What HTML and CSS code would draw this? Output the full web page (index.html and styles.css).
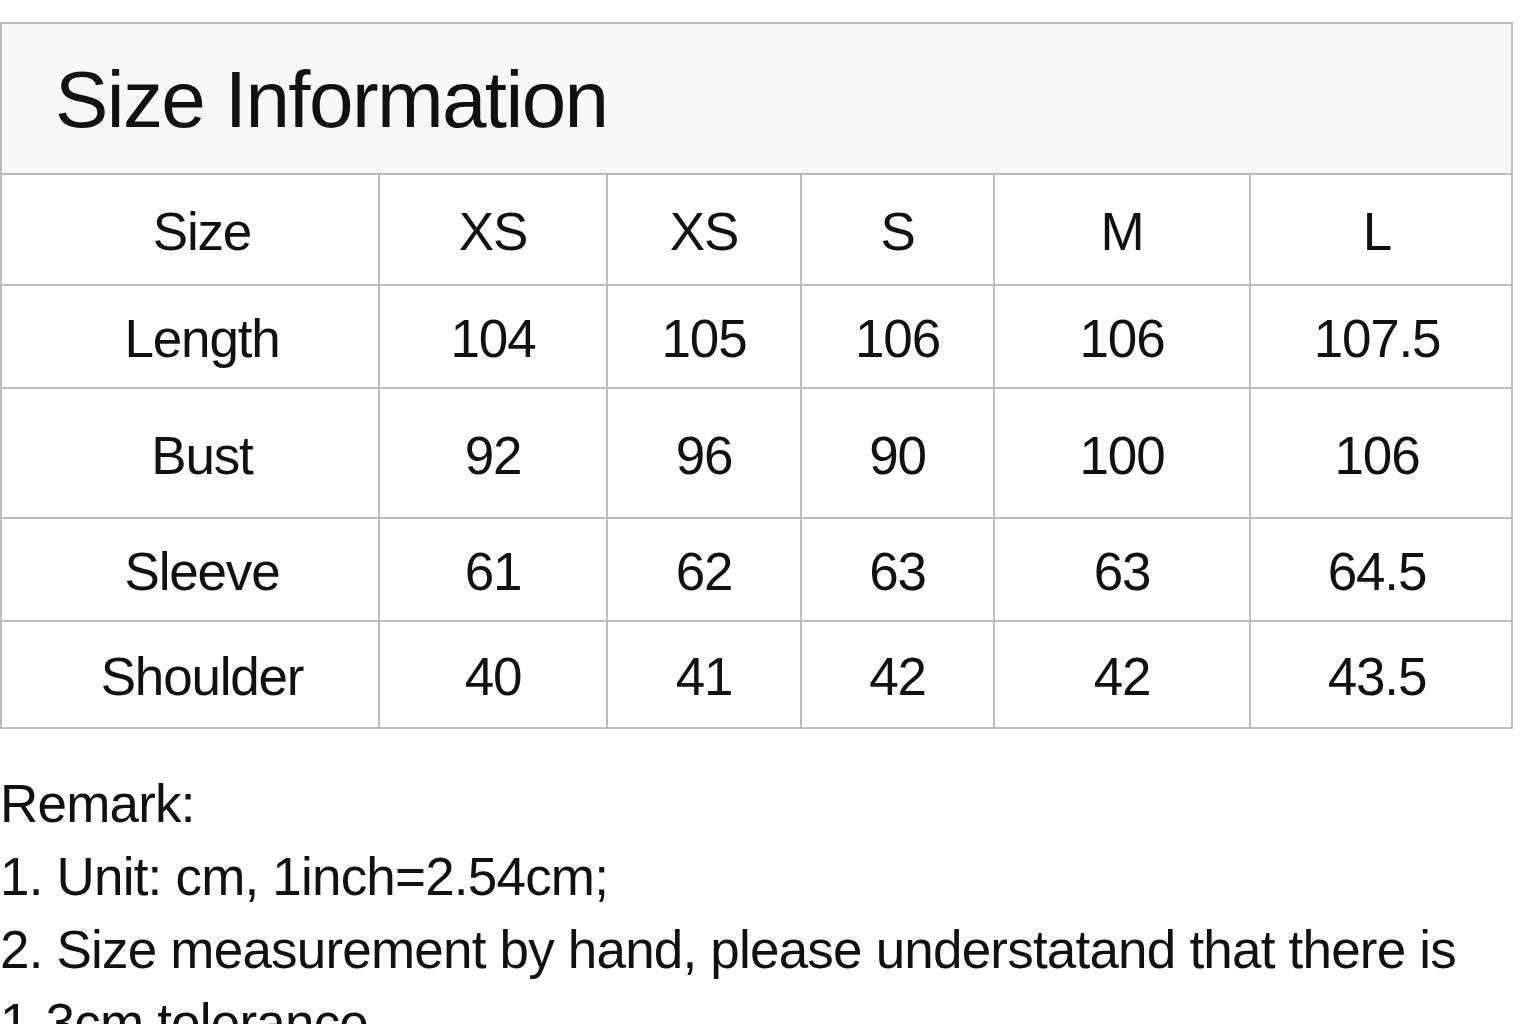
FILE: index.html
```html
<!DOCTYPE html>
<html lang="en">
<head>
<meta charset="utf-8">
<title>Size Information</title>
<link rel="stylesheet" href="styles.css">
</head>
<body>
<div class="sheet">
  <div class="title">Size Information</div>
  <div class="grid">
    <div class="cell first r1">Size</div><div class="cell r1">XS</div><div class="cell r1">XS</div><div class="cell r1">S</div><div class="cell r1">M</div><div class="cell last r1">L</div>
    <div class="cell first r2">Length</div><div class="cell r2">104</div><div class="cell r2">105</div><div class="cell r2">106</div><div class="cell r2">106</div><div class="cell last r2">107.5</div>
    <div class="cell first r3">Bust</div><div class="cell r3">92</div><div class="cell r3">96</div><div class="cell r3">90</div><div class="cell r3">100</div><div class="cell last r3">106</div>
    <div class="cell first r4">Sleeve</div><div class="cell r4">61</div><div class="cell r4">62</div><div class="cell r4">63</div><div class="cell r4">63</div><div class="cell last r4">64.5</div>
    <div class="cell first r5">Shoulder</div><div class="cell r5">40</div><div class="cell r5">41</div><div class="cell r5">42</div><div class="cell r5">42</div><div class="cell last r5">43.5</div>
  </div>
  <div class="remark">
    <p>Remark:</p>
    <p>1. Unit: cm, 1inch=2.54cm;</p>
    <p>2. Size measurement by hand, please understatand that there is <span class="nowrap">1-3cm</span> tolerance</p>
  </div>
</div>
</body>
</html>
```
FILE: styles.css
```css
* { box-sizing: border-box; }
html, body {
  margin: 0;
  padding: 0;
  background: #ffffff;
}
body {
  font-family: "Liberation Sans", Arial, Helvetica, sans-serif;
  color: #111111;
  overflow: hidden;
}
.sheet {
  width: 1513px;
  padding-top: 22px;
}
.title {
  height: 153px;
  border: 2px solid #bdbdbd;
  background: #f8f8f8;
  font-size: 80px;
  letter-spacing: -1.6px;
  display: flex;
  align-items: center;
  padding-left: 53px;
  padding-top: 2px;
}
.grid {
  display: grid;
  grid-template-columns: 378px 228px 194px 193px 256px 262px;
  border-left: 2px solid #bdbdbd;
}
.cell {
  border-right: 2px solid #bdbdbd;
  border-bottom: 2px solid #bdbdbd;
  display: flex;
  align-items: center;
  justify-content: center;
  font-size: 53px;
  letter-spacing: -1.2px;
  padding-top: 4px;
}
.cell.first { padding-left: 24px; }
.cell.last { padding-right: 8px; }
.r1 { height: 111px; }
.r2 { height: 103px; }
.r3 { height: 130px; }
.r4 { height: 103px; }
.r5 { height: 107px; }
.remark {
  margin-top: 38px;
  font-size: 53px;
  line-height: 73px;
  letter-spacing: -0.8px;
}
.remark p {
  margin: 0;
}
.nowrap {
  white-space: nowrap;
}
```
